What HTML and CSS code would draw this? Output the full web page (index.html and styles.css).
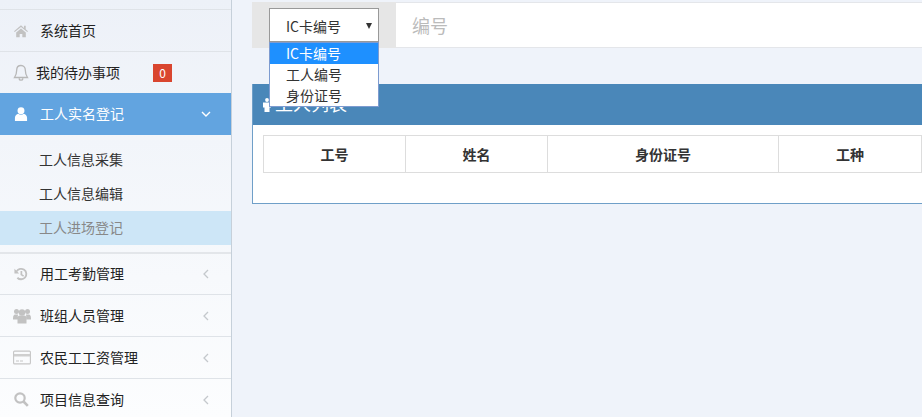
FILE: index.html
```html
<!DOCTYPE html>
<html lang="en">
<head>
    <meta charset="UTF-8">
    <meta name="viewport" content="width=device-width, initial-scale=1.0">
    <title>工人实名登记</title>
    <link rel="stylesheet" href="styles.css">
</head>
<body>
    <div class="sidebar">
        <div class="nav-row">
            <svg class="nav-icon" viewBox="0 0 16 14"><path d="M8 0.5 0 7.2l.9 1L8 2.4l7.100 5.800.9-1-2.600-2.200V1h-2v2.600zM2.500 8.600V14h4v-3.500h3V14h4V8.600L8 4z"/></svg>
            <span class="nav-text">系统首页</span>
        </div>
        <div class="nav-row nav-row-todo">
            <svg class="nav-icon-bell" viewBox="0 0 16 17"><path d="M8 1.500c-2.800 0-4.300 2-4.300 4.500 0 3.800-.8 5.500-2.200 7.500h13c-1.400-2-2.200-3.700-2.200-7.500C12.300 3.500 10.800 1.500 8 1.500zM6 14.500c.2 1 1 1.700 2 1.700s1.800-.7 2-1.700" fill="none" stroke="#b8b8b8" stroke-width="1.300"/></svg>
            <span class="nav-text">我的待办事项</span>
            <span class="badge">0</span>
        </div>
        <div class="nav-row nav-row-open">
            <svg class="nav-icon" viewBox="0 0 14 15"><circle cx="7" cy="4" r="3.700" fill="#fff"/><path d="M0.500 15v-3.500C.5 9 2.500 7.500 4 7.200c1.800 1.300 4.200 1.300 6 0 1.500.3 3.500 1.800 3.500 4.300V15z" fill="#fff"/></svg>
            <span class="nav-text">工人实名登记</span>
            <svg class="nav-arrow-down" viewBox="0 0 10 6"><path d="M1 1l4 4 4-4" fill="none" stroke="#fff" stroke-width="1.400"/></svg>
        </div>
        <div class="sub-list">
            <div class="sub-row">工人信息采集</div>
            <div class="sub-row">工人信息编辑</div>
            <div class="sub-row sub-row-active">工人进场登记</div>
        </div>
        <div class="nav-row nav-row-first">
            <svg class="nav-icon" viewBox="0 0 15 14"><path d="M2.800 4.200A5.600 5.600 0 1 1 3.600 11" fill="none" stroke="#c2c2c2" stroke-width="2"/><path d="M0.500 1.500v5h5z"/><path d="M7 3.800h1.800v3.400l2 1.500-1 1.300L7 8z"/></svg>
            <span class="nav-text">用工考勤管理</span>
            <svg class="nav-arrow" viewBox="0 0 6 10"><path d="M5 1L1 5l4 4" fill="none" stroke="#c4c8cc" stroke-width="1.300"/></svg>
        </div>
        <div class="nav-row">
            <svg class="nav-icon-wide nav-icon-group" viewBox="0 0 18 15"><circle cx="3.500" cy="3" r="2.500"/><circle cx="14.500" cy="3" r="2.500"/><circle cx="9" cy="4" r="3.200"/><path d="M0 10c0-3 1-4 2-4h3l-.5 5H0zM18 10c0-3-1-4-2-4h-3l.5 5H18zM4.500 15v-5c0-2 1-3 2-3h5c1 0 2 1 2 3v5z"/></svg>
            <span class="nav-text">班组人员管理</span>
            <svg class="nav-arrow" viewBox="0 0 6 10"><path d="M5 1L1 5l4 4" fill="none" stroke="#c4c8cc" stroke-width="1.300"/></svg>
        </div>
        <div class="nav-row">
            <svg class="nav-icon-wide" viewBox="0 0 18 14"><rect x=".6" y=".6" width="16.800" height="12.800" rx="1" fill="none" stroke="#c6c6c6" stroke-width="1.100"/><rect x="1" y="3.500" width="16" height="2.500" fill="#cfcfcf"/><path d="M3 10.500h3M7 10.500h3" stroke="#c6c6c6" stroke-width="1"/></svg>
            <span class="nav-text">农民工工资管理</span>
            <svg class="nav-arrow" viewBox="0 0 6 10"><path d="M5 1L1 5l4 4" fill="none" stroke="#c4c8cc" stroke-width="1.300"/></svg>
        </div>
        <div class="nav-row">
            <svg class="nav-icon nav-icon-search" viewBox="0 0 15 15"><circle cx="6" cy="6" r="4.700" fill="none" stroke="#c2c2c2" stroke-width="2.200"/><path d="M9.500 9.500l4.300 4.300" stroke="#c2c2c2" stroke-width="2.600"/></svg>
            <span class="nav-text">项目信息查询</span>
            <svg class="nav-arrow" viewBox="0 0 6 10"><path d="M5 1L1 5l4 4" fill="none" stroke="#c4c8cc" stroke-width="1.300"/></svg>
        </div>
    </div>

    <div class="main">
        <div class="search-bar">
            <div class="search-type">
                <div class="select-box">
                    <span>IC卡编号</span>
                    <i class="select-arrow"></i>
                    <div class="select-menu">
                        <div class="select-option select-option-on">IC卡编号</div>
                        <div class="select-option">工人编号</div>
                        <div class="select-option">身份证号</div>
                    </div>
                </div>
            </div>
            <div class="search-input">编号</div>
        </div>

        <div class="panel">
            <div class="panel-head">
                <svg class="panel-icon" viewBox="0 0 8 14"><circle cx="4" cy="2" r="1.900" fill="#fff"/><path d="M0 4.500h8v5H6.500V14h-5V9.500H0z" fill="#fff"/></svg>
                <span class="panel-title">工人列表</span>
            </div>
            <div class="panel-body">
                <table class="worker-table">
                    <tr>
                        <th class="col-id">工号</th>
                        <th class="col-name">姓名</th>
                        <th class="col-card">身份证号</th>
                        <th>工种</th>
                    </tr>
                </table>
            </div>
        </div>
    </div>
</body>
</html>
```

FILE: styles.css
```css
html, body {
    height: 100%;
}
body {
    display: flex;
    margin: 0;
    overflow: hidden;
    font-family: "Noto Sans CJK SC", "Liberation Sans", sans-serif;
    font-size: 14px;
    color: #333;
    background-color: #eff3fa;
}
.sidebar {
    flex: none;
    box-sizing: border-box;
    width: 232px;
    height: 417px;
    padding-top: 9px;
    overflow: hidden;
    background: linear-gradient(to bottom, #edf1f8, #fcfdfe);
    border-right: 1px solid #c6d0da;
}
.nav-row {
    display: flex;
    align-items: center;
    box-sizing: border-box;
    height: 42px;
    padding-left: 14px;
    border-top: 1px solid #dfe3e8;
    color: #222;
}
.nav-row svg {
    flex: none;
    fill: #c2c2c2;
}
.nav-icon {
    width: 14px;
    height: 14px;
    margin-right: 12px;
}
.nav-icon-wide {
    width: 18px;
    height: 15px;
    margin-left: -1px;
    margin-right: 9px;
}
.nav-icon-group {
    height: 16px;
}
.nav-icon-search {
    width: 15px;
    height: 15px;
    margin-right: 11px;
}
.nav-text {
    flex: none;
    margin-bottom: 2px;
    line-height: 20px;
}
.nav-row-todo {
    padding-left: 13px;
}
.nav-icon-bell {
    width: 16px;
    height: 17px;
    margin-right: 7px;
}
.badge {
    width: 19px;
    height: 18px;
    margin-left: 33px;
    background: #d9452f;
    color: #fff;
    font-size: 12px;
    line-height: 18px;
    text-align: center;
}
.nav-row-open {
    border-top: none;
    background: #62a4e0;
    color: #fff;
}
.nav-row .nav-arrow-down {
    width: 10px;
    height: 6px;
    margin-left: auto;
    margin-right: 20px;
}
.nav-row .nav-arrow {
    width: 6px;
    height: 10px;
    margin-left: auto;
    margin-right: 22px;
}
.sub-list {
    padding: 8px 0 7px;
}
.sub-row {
    height: 34px;
    padding-left: 39px;
    line-height: 32px;
}
.sub-row-active {
    background: #cde6f7;
    color: #888;
}
.nav-row-first {
    border-top: 2px solid #e3e6ea;
}
.main {
    flex: none;
    width: 690px;
    padding-left: 20px;
}
.search-bar {
    display: flex;
    box-sizing: border-box;
    width: 680px;
    height: 46px;
    margin-top: 2px;
    border-top: 1px solid #e4e6ea;
    border-bottom: 1px solid #e4e6ea;
    background: #fff;
}
.search-type {
    flex: none;
    box-sizing: border-box;
    width: 144px;
    margin-top: -1px;
    margin-bottom: -1px;
    padding: 6px 0 0 17px;
    background: #e6e6e6;
}
.select-box {
    position: relative;
    box-sizing: border-box;
    width: 110px;
    height: 34px;
    padding-left: 16px;
    border: 1px solid #999;
    background: #fff;
    line-height: 34px;
}
.select-arrow {
    position: absolute;
    top: 14px;
    right: 6px;
    border-top: 6px solid #333;
    border-left: 3px solid transparent;
    border-right: 3px solid transparent;
}
.select-menu {
    position: absolute;
    z-index: 2;
    top: 33px;
    left: -1px;
    box-sizing: border-box;
    width: 110px;
    height: 65px;
    border: 1px solid #7d9bd0;
    background: #fff;
    line-height: 21px;
}
.select-option {
    height: 21px;
    padding-left: 16px;
}
.select-option-on {
    background: #1e90ff;
    color: #fff;
}
.search-input {
    padding-left: 16px;
    color: #bbb;
    font-size: 18px;
    line-height: 44px;
}
.panel {
    box-sizing: border-box;
    width: 680px;
    height: 120px;
    margin-top: 36px;
    border-left: 1px solid #6f9fc8;
    border-bottom: 1px solid #6f9fc8;
    background: #fff;
}
.panel-head {
    display: flex;
    align-items: center;
    height: 41px;
    padding-left: 10px;
    background: #4a87b9;
    color: #fff;
    font-size: 18px;
}
.panel-icon {
    width: 8px;
    height: 14px;
    margin-right: 4px;
}
.panel-title {
    margin-bottom: 3px;
}
.panel-body {
    padding: 10px;
}
.worker-table {
    width: 659px;
    table-layout: fixed;
    border-collapse: collapse;
}
.worker-table th {
    height: 36px;
    padding: 0;
    border: 1px solid #ddd;
    font-size: 14px;
    font-weight: bold;
    text-align: center;
}
.col-id, .col-name {
    width: 141px;
}
.col-card {
    width: 230px;
}
```
